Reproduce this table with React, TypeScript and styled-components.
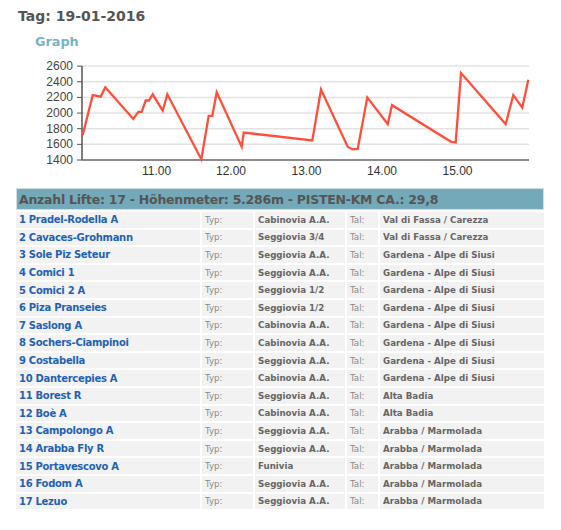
import React from "react";
import styled, { createGlobalStyle } from "styled-components";

const Global = createGlobalStyle`
  html, body { margin: 0; padding: 0; background: #fff; }
  body { font-family: "DejaVu Sans", Verdana, sans-serif; }
`;

const Page = styled.div`
  width: 561px;
  height: 530px;
  overflow: hidden;
  display: flex;
  flex-direction: column;
`;

const Title = styled.h1`
  margin: 0;
  padding: 6px 0 0 18px;
  font-size: 14px;
  line-height: 20px;
  font-weight: bold;
  color: #555;
`;

const SubTitle = styled.h2`
  margin: 8px 0 0 35px;
  font-size: 12.8px;
  line-height: 16px;
  font-weight: bold;
  color: #7ab3c5;
`;

const ChartSvg = styled.svg`
  display: block;
  width: 561px;
  height: 130px;
`;

const Table = styled.table`
  margin: 6px 0 0 14px;
  border-collapse: separate;
  border-spacing: 2px 2px;
  table-layout: fixed;
  width: 532px;
`;

const HeadCell = styled.th`
  height: 20px;
  padding: 0 0 0 2px;
  background: #74a9b9;
  border: 1px solid #d4dde0;
  text-align: left;
  font-size: 12.5px;
  letter-spacing: -0.25px;
  font-weight: bold;
  color: #555;
  white-space: nowrap;
`;

const Cell = styled.td<{ $kind: "name" | "label" | "value" }>`
  height: 15.6px;
  padding: 0 0 0 3px;
  background: #f2f2f2;
  white-space: nowrap;
  overflow: hidden;
  vertical-align: middle;
  font-size: ${(p) => (p.$kind === "name" ? "10px" : "8.7px")};
  letter-spacing: ${(p) => (p.$kind === "name" ? "-0.3px" : "0")};
  font-weight: ${(p) => (p.$kind === "label" ? "normal" : "bold")};
  color: ${(p) => (p.$kind === "name" ? "#1f62b3" : p.$kind === "label" ? "#8a8a8a" : "#666")};
`;

type Lift = { name: string; typ: string; tal: string };

const lifts: Lift[] = [
  { name: "1 Pradel-Rodella A", typ: "Cabinovia A.A.", tal: "Val di Fassa / Carezza" },
  { name: "2 Cavaces-Grohmann", typ: "Seggiovia 3/4", tal: "Val di Fassa / Carezza" },
  { name: "3 Sole Piz Seteur", typ: "Seggiovia A.A.", tal: "Gardena - Alpe di Siusi" },
  { name: "4 Comici 1", typ: "Seggiovia A.A.", tal: "Gardena - Alpe di Siusi" },
  { name: "5 Comici 2 A", typ: "Seggiovia 1/2", tal: "Gardena - Alpe di Siusi" },
  { name: "6 Piza Pranseies", typ: "Seggiovia 1/2", tal: "Gardena - Alpe di Siusi" },
  { name: "7 Saslong A", typ: "Cabinovia A.A.", tal: "Gardena - Alpe di Siusi" },
  { name: "8 Sochers-Ciampinoi", typ: "Cabinovia A.A.", tal: "Gardena - Alpe di Siusi" },
  { name: "9 Costabella", typ: "Seggiovia A.A.", tal: "Gardena - Alpe di Siusi" },
  { name: "10 Dantercepies A", typ: "Cabinovia A.A.", tal: "Gardena - Alpe di Siusi" },
  { name: "11 Borest R", typ: "Seggiovia A.A.", tal: "Alta Badia" },
  { name: "12 Boè A", typ: "Cabinovia A.A.", tal: "Alta Badia" },
  { name: "13 Campolongo A", typ: "Seggiovia A.A.", tal: "Arabba / Marmolada" },
  { name: "14 Arabba Fly R", typ: "Seggiovia A.A.", tal: "Arabba / Marmolada" },
  { name: "15 Portavescovo A", typ: "Funivia", tal: "Arabba / Marmolada" },
  { name: "16 Fodom A", typ: "Seggiovia A.A.", tal: "Arabba / Marmolada" },
  { name: "17 Lezuo", typ: "Seggiovia A.A.", tal: "Arabba / Marmolada" },
];

// chart in page pixel coordinates
const X0 = 82;
const X1 = 529;
const yOf = (v: number) => 160 - ((v - 1400) / 200) * 15.65;

const points: [number, number][] = [
  [82.7, 1720], [92.7, 2230], [100.7, 2210], [105.3, 2330], [133.3, 1925],
  [138.3, 2015], [141.7, 2015], [145.7, 2160], [149, 2160], [152.7, 2240],
  [162.7, 2030], [167.3, 2240], [201.3, 1410], [208.7, 1965], [212.3, 1965],
  [216.7, 2265], [241.7, 1570], [243.7, 1750], [312.3, 1650], [321, 2300],
  [347.7, 1570], [352.7, 1535], [357.7, 1540], [367.3, 2200], [387.7, 1860],
  [392, 2100], [450.7, 1635], [455.7, 1625], [461, 2510], [505.7, 1860],
  [513.3, 2230], [522.3, 2070], [528.3, 2425],
];

const yTicks = [2600, 2400, 2200, 2000, 1800, 1600, 1400];
const xTicks: [number, string][] = [
  [156.5, "11.00"], [231, "12.00"], [306.5, "13.00"], [382, "14.00"], [457.5, "15.00"],
];

function Chart() {
  const d = points.map(([x, v], i) => `${i ? "L" : "M"}${x} ${yOf(v).toFixed(1)}`).join(" ");
  return (
    <ChartSvg viewBox="0 50 561 130">
      {yTicks.map((t) => (
        <g key={t}>
          {t !== 1400 && (
            <line x1={X0} x2={X1} y1={yOf(t)} y2={yOf(t)} stroke="#e2e2e2" strokeWidth={1.5} />
          )}
          <line x1={X0 - 5} x2={X0} y1={yOf(t)} y2={yOf(t)} stroke="#555" strokeWidth={1} />
          <text
            x={73}
            y={yOf(t) + 4}
            textAnchor="end"
            fontFamily="'Liberation Sans', Arial, sans-serif"
            fontSize={12}
            fill="#444"
          >
            {t}
          </text>
        </g>
      ))}
      <line x1={X0} x2={X0} y1={yOf(2600)} y2={yOf(1400)} stroke="#555" strokeWidth={1.5} />
      <line x1={X0} x2={X1} y1={yOf(1400)} y2={yOf(1400)} stroke="#666" strokeWidth={1.5} />
      {xTicks.map(([x, l]) => (
        <text
          key={l}
          x={x}
          y={174.5}
          textAnchor="middle"
          fontFamily="'Liberation Sans', Arial, sans-serif"
          fontSize={12}
          fill="#333"
        >
          {l}
        </text>
      ))}
      <path d={d} fill="none" stroke="#ff4f3a" strokeWidth={2.3} strokeLinejoin="miter" />
    </ChartSvg>
  );
}

export default function App() {
  return (
    <Page>
      <Global />
      <Title>Tag: 19-01-2016</Title>
      <SubTitle>Graph</SubTitle>
      <Chart />
      <Table>
        <colgroup>
          <col style={{ width: 184 }} />
          <col style={{ width: 51 }} />
          <col style={{ width: 90 }} />
          <col style={{ width: 31 }} />
          <col style={{ width: 164 }} />
        </colgroup>
        <thead>
          <tr>
            <HeadCell colSpan={5}>Anzahl Lifte: 17 - Höhenmeter: 5.286m - PISTEN-KM CA.: 29,8</HeadCell>
          </tr>
        </thead>
        <tbody>
          {lifts.map((l) => (
            <tr key={l.name}>
              <Cell $kind="name">{l.name}</Cell>
              <Cell $kind="label">Typ:</Cell>
              <Cell $kind="value">{l.typ}</Cell>
              <Cell $kind="label">Tal:</Cell>
              <Cell $kind="value">{l.tal}</Cell>
            </tr>
          ))}
        </tbody>
      </Table>
    </Page>
  );
}
